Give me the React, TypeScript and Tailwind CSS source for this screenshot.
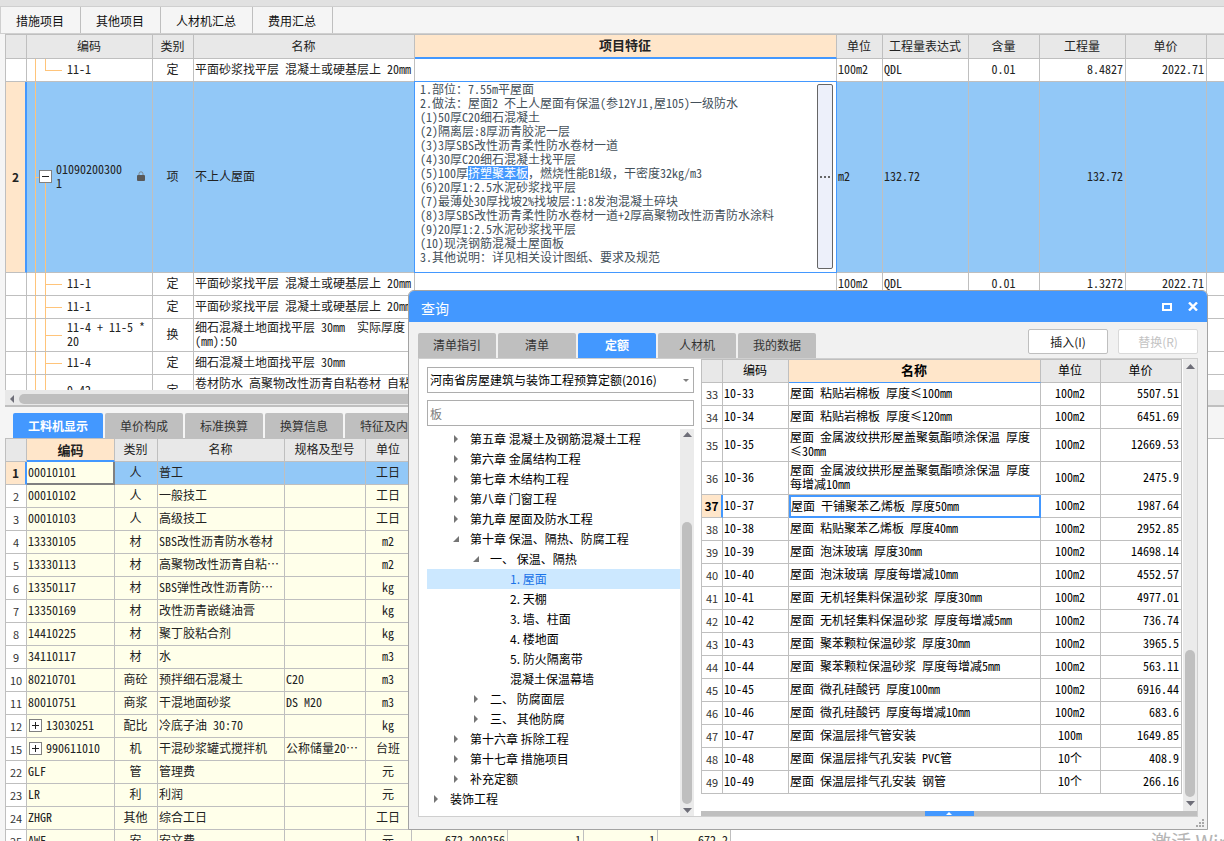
import { useState } from "react";
import clsx from "clsx";

const ui = "font-['Noto_Sans_CJK_SC',sans-serif]";
// Grid text uses the half-width latin forms, so two digits take one han cell
const grid = "font-['Noto_Sans_CJK_SC',sans-serif] [font-feature-settings:'hwid'] text-xs leading-[14px]";

const cellBase = "border-r border-b border-[#bfbfbf] pt-0 pb-0.5 pr-0.5 font-normal overflow-hidden";
const cell = clsx(cellBase, "pl-px");
const rowNo = "border-r border-b border-[#bfbfbf] bg-white p-0 text-center text-[11px] text-[#333] [font-feature-settings:normal]";
const rowNoCurrent = "border-r-2 border-b border-r-[#4398ff] border-b-[#bfbfbf] bg-[#ffe6ca] p-0 text-center font-bold [font-feature-settings:normal]";

const topTabs = ["措施项目", "其他项目", "人材机汇总", "费用汇总"];

interface ItemRow {
    code: string;
    type: string;
    name: string;
    tall?: boolean;
    last?: boolean;
    unit?: string;
    expr?: string;
    content?: string;
    qty?: string;
    price?: string;
}

const firstItem: ItemRow = { code: "11-1", type: "定", name: "平面砂浆找平层 混凝土或硬基层上 20mm", unit: "100m2", expr: "QDL", content: "0.01", qty: "8.4827", price: "2022.71", last: true };

const childItems: ItemRow[] = [
    { code: "11-1", type: "定", name: "平面砂浆找平层 混凝土或硬基层上 20mm", unit: "100m2", expr: "QDL", content: "0.01", qty: "1.3272", price: "2022.71" },
    { code: "11-1", type: "定", name: "平面砂浆找平层 混凝土或硬基层上 20mm" },
    { code: "11-4 + 11-5 *\n20", type: "换", name: "细石混凝土地面找平层 30mm  实际厚度\n(mm):50", tall: true },
    { code: "11-4", type: "定", name: "细石混凝土地面找平层 30mm" },
    { code: "9-42", type: "定", name: "卷材防水 高聚物改性沥青自粘卷材 自粘\n法一层 平面", tall: true },
];

const bottomTabs = ["工料机显示", "单价构成", "标准换算", "换算信息", "特征及内容"];

interface Resource {
    no: number;
    code: string;
    type: string;
    name: string;
    spec?: string;
    unit: string;
    expandable?: boolean;
    values?: string[];
}

const resources: Resource[] = [
    { no: 1, code: "00010101", type: "人", name: "普工", unit: "工日" },
    { no: 2, code: "00010102", type: "人", name: "一般技工", unit: "工日" },
    { no: 3, code: "00010103", type: "人", name: "高级技工", unit: "工日" },
    { no: 4, code: "13330105", type: "材", name: "SBS改性沥青防水卷材", unit: "m2" },
    { no: 5, code: "13330113", type: "材", name: "高聚物改性沥青自粘⋯", unit: "m2" },
    { no: 6, code: "13350117", type: "材", name: "SBS弹性改性沥青防⋯", unit: "kg" },
    { no: 7, code: "13350169", type: "材", name: "改性沥青嵌缝油膏", unit: "kg" },
    { no: 8, code: "14410225", type: "材", name: "聚丁胶粘合剂", unit: "kg" },
    { no: 9, code: "34110117", type: "材", name: "水", unit: "m3" },
    { no: 10, code: "80210701", type: "商砼", name: "预拌细石混凝土", spec: "C20", unit: "m3" },
    { no: 11, code: "80010751", type: "商浆", name: "干混地面砂浆", spec: "DS M20", unit: "m3" },
    { no: 12, code: "13030251", type: "配比", name: "冷底子油 30:70", unit: "kg", expandable: true },
    { no: 15, code: "990611010", type: "机", name: "干混砂浆罐式搅拌机", spec: "公称储量20⋯", unit: "台班", expandable: true },
    { no: 22, code: "GLF", type: "管", name: "管理费", unit: "元" },
    { no: 23, code: "LR", type: "利", name: "利润", unit: "元" },
    { no: 24, code: "ZHGR", type: "其他", name: "综合工日", unit: "工日" },
    { no: 25, code: "AWF", type: "安", name: "安文费", unit: "元", values: ["672.200256", "1", "1", "672.2"] },
];

const dialogTabs = ["清单指引", "清单", "定额", "人材机", "我的数据"];

interface TreeNode {
    label: string;
    level: number;
    state?: "open" | "closed";
}

const tree: TreeNode[] = [
    { label: "第五章 混凝土及钢筋混凝土工程", level: 1, state: "closed" },
    { label: "第六章 金属结构工程", level: 1, state: "closed" },
    { label: "第七章 木结构工程", level: 1, state: "closed" },
    { label: "第八章 门窗工程", level: 1, state: "closed" },
    { label: "第九章 屋面及防水工程", level: 1, state: "closed" },
    { label: "第十章 保温、隔热、防腐工程", level: 1, state: "open" },
    { label: "一、 保温、隔热", level: 2, state: "open" },
    { label: "1. 屋面", level: 3 },
    { label: "2. 天棚", level: 3 },
    { label: "3. 墙、柱面", level: 3 },
    { label: "4. 楼地面", level: 3 },
    { label: "5. 防火隔离带", level: 3 },
    { label: "混凝土保温幕墙", level: 3 },
    { label: "二、 防腐面层", level: 2, state: "closed" },
    { label: "三、 其他防腐", level: 2, state: "closed" },
    { label: "第十六章 拆除工程", level: 1, state: "closed" },
    { label: "第十七章 措施项目", level: 1, state: "closed" },
    { label: "补充定额", level: 1, state: "closed" },
    { label: "装饰工程", level: 0, state: "closed" },
];

const indent = ["pl-1", "pl-6", "pl-11", "pl-16"];

const quotas = [
    { no: 33, name: "屋面 粘贴岩棉板 厚度≤100mm", unit: "100m2", price: "5507.51" },
    { no: 34, name: "屋面 粘贴岩棉板 厚度≤120mm", unit: "100m2", price: "6451.69" },
    { no: 35, name: "屋面 金属波纹拱形屋盖聚氨酯喷涂保温 厚度\n≤30mm", unit: "100m2", price: "12669.53" },
    { no: 36, name: "屋面 金属波纹拱形屋盖聚氨酯喷涂保温 厚度\n每增减10mm", unit: "100m2", price: "2475.9" },
    { no: 37, name: "屋面 干铺聚苯乙烯板 厚度50mm", unit: "100m2", price: "1987.64" },
    { no: 38, name: "屋面 粘贴聚苯乙烯板 厚度40mm", unit: "100m2", price: "2952.85" },
    { no: 39, name: "屋面 泡沫玻璃 厚度30mm", unit: "100m2", price: "14698.14" },
    { no: 40, name: "屋面 泡沫玻璃 厚度每增减10mm", unit: "100m2", price: "4552.57" },
    { no: 41, name: "屋面 无机轻集料保温砂浆 厚度30mm", unit: "100m2", price: "4977.01" },
    { no: 42, name: "屋面 无机轻集料保温砂浆 厚度每增减5mm", unit: "100m2", price: "736.74" },
    { no: 43, name: "屋面 聚苯颗粒保温砂浆 厚度30mm", unit: "100m2", price: "3965.5" },
    { no: 44, name: "屋面 聚苯颗粒保温砂浆 厚度每增减5mm", unit: "100m2", price: "563.11" },
    { no: 45, name: "屋面 微孔硅酸钙 厚度100mm", unit: "100m2", price: "6916.44" },
    { no: 46, name: "屋面 微孔硅酸钙 厚度每增减10mm", unit: "100m2", price: "683.6" },
    { no: 47, name: "屋面 保温层排气管安装", unit: "100m", price: "1649.85" },
    { no: 48, name: "屋面 保温层排气孔安装 PVC管", unit: "10个", price: "408.9" },
    { no: 49, name: "屋面 保温层排气孔安装 钢管", unit: "10个", price: "266.16" },
];

function Triangle({ dir, className }: { dir: "up" | "down" | "left" | "right" | "open"; className?: string }) {
    const shapes = {
        up: "M0 6 L4.5 1 L9 6 Z",
        down: "M0 2 L9 2 L4.5 7 Z",
        left: "M5 0 L5 8 L1 4 Z",
        right: "M3 0 L7 4 L3 8 Z",
        open: "M8 1 L8 7 L2 7 Z",
    };
    return (
        <svg viewBox="0 0 9 8" className={clsx("h-2 w-[9px] shrink-0 fill-current", className)} aria-hidden="true">
            <path d={shapes[dir]} />
        </svg>
    );
}

function ToggleBox({ open, label }: { open?: boolean; label: string }) {
    return (
        <button aria-label={label} className="flex size-[13px] shrink-0 items-center justify-center border border-[#808080] bg-white">
            <svg viewBox="0 0 9 9" className="size-[9px]" aria-hidden="true">
                <path d={open ? "M1 4.5H8" : "M1 4.5H8M4.5 1V8"} stroke="#222" strokeWidth="1" />
            </svg>
        </button>
    );
}

function LockIcon() {
    return (
        <svg viewBox="0 0 8 10" className="h-2.5 w-2 shrink-0" aria-hidden="true">
            <path d="M2 4.5V2.8a2 2 0 0 1 4 0V4.5" fill="none" stroke="#7a8790" />
            <rect y="4" width="8" height="6" rx="1" fill="#595959" />
        </svg>
    );
}

function ItemLine({ item }: { item: ItemRow }) {
    return (
        <tr className={clsx("bg-white", item.tall ? "h-[33px]" : "h-[23px]")}>
            <td className={cell} />
            <td className={clsx(cellBase, "relative pl-10 whitespace-pre")}>
                <span className="absolute inset-y-0 left-2 w-px bg-[#ffc47a]" />
                <span className={clsx("absolute top-0 left-[18px] w-px bg-[#ffc47a]", item.last ? "h-1/2" : "h-full")} />
                <span className="absolute top-1/2 left-[18px] h-px w-[17px] bg-[#ffc47a]" />
                {item.code}
            </td>
            <td className={clsx(cell, "text-center")}>{item.type}</td>
            <td className={clsx(cell, "whitespace-pre")}>{item.name}</td>
            <td className={cell} />
            <td className={cell}>{item.unit}</td>
            <td className={cell}>{item.expr}</td>
            <td className={clsx(cell, "text-center")}>{item.content}</td>
            <td className={clsx(cell, "text-right")}>{item.qty}</td>
            <td className={clsx(cell, "text-right")}>{item.price}</td>
            <td className={clsx(cell, "border-r-0")} />
        </tr>
    );
}

function FeatureEditor() {
    // Overlaps the grid lines above and to the left, so the frame replaces them
    return (
        <div className="relative -mt-px -ml-px flex h-48 border border-[#4398ff] bg-white text-[#44505a]">
            <div
                role="textbox"
                aria-multiline="true"
                aria-label="项目特征"
                contentEditable
                suppressContentEditableWarning
                className="grow whitespace-pre pl-[5px] outline-none"
            >
                {"1.部位：7.55m平屋面\n2.做法：屋面2 不上人屋面有保温(参12YJ1,屋105)一级防水\n(1)50厚C20细石混凝土\n(2)隔离层:8厚沥青胶泥一层\n(3)3厚SBS改性沥青柔性防水卷材一道\n(4)30厚C20细石混凝土找平层\n(5)100厚"}
                <mark className="inline-block h-3.5 bg-[#4398ff] align-top leading-[14px] text-white">挤塑聚苯板</mark>
                <span className="[font-feature-settings:normal]">，</span>
                {"燃烧性能B1级"}
                <span className="[font-feature-settings:normal]">，</span>
                {"干密度32kg/m3\n(6)20厚1:2.5水泥砂浆找平层\n(7)最薄处30厚找坡2%找坡层:1:8发泡混凝土碎块\n(8)3厚SBS改性沥青柔性防水卷材一道+2厚高聚物改性沥青防水涂料\n(9)20厚1:2.5水泥砂浆找平层\n(10)现浇钢筋混凝土屋面板\n3.其他说明：详见相关设计图纸、要求及规范"}
            </div>
            <button aria-label="编辑项目特征" className="mt-0.5 mr-[3px] mb-[3px] flex w-4 shrink-0 items-center justify-center gap-0.5 rounded-xs border border-[#666] bg-[#edf0fa]">
                <span className="size-0.5 bg-[#666]" />
                <span className="size-0.5 bg-[#666]" />
                <span className="size-0.5 bg-[#666]" />
            </button>
        </div>
    );
}

function ItemTable() {
    const head = clsx(cell, "border-t bg-[#e8e8e8]");
    return (
        <table className={clsx(grid, "w-full table-fixed border-separate border-spacing-0 border-l border-[#bfbfbf] text-[#222]")}>
            <colgroup>
                <col className="w-[21px]" />
                <col className="w-[126px]" />
                <col className="w-[41px]" />
                <col className="w-[221px]" />
                <col />
                <col className="w-[46px]" />
                <col className="w-[86px]" />
                <col className="w-[71px]" />
                <col className="w-[86px]" />
                <col className="w-[81px]" />
                <col className="w-[17px]" />
            </colgroup>
            <thead>
                <tr className="h-[25px]">
                    <th className={head} />
                    <th className={head}>编码</th>
                    <th className={head}>类别</th>
                    <th className={head}>名称</th>
                    <th className="border-t border-r border-b-2 border-t-[#bfbfbf] border-r-[#bfbfbf] border-b-[#4398ff] bg-[#ffe6ca] pt-0 pr-0.5 pb-0.5 pl-px text-[13px] font-bold">项目特征</th>
                    <th className={head}>单位</th>
                    <th className={head}>工程量表达式</th>
                    <th className={head}>含量</th>
                    <th className={head}>工程量</th>
                    <th className={head}>单价</th>
                    <th className={clsx(head, "border-r-0")} />
                </tr>
            </thead>
            <tbody>
                <ItemLine item={firstItem} />
                <tr className="h-[191px] bg-[#92c8f7]">
                    <td className={rowNoCurrent}>2</td>
                    <td className={clsx(cell, "relative")}>
                        <span className="absolute inset-y-0 left-2 w-px bg-[#ffc47a]" />
                        <span className="absolute top-1/2 left-2 h-px w-1 bg-[#ffc47a]" />
                        <span className="absolute top-1/2 bottom-0 left-[18px] w-px bg-[#ffc47a]" />
                        <div className="relative flex items-center gap-1 pr-[5px] pl-[11px]">
                            <ToggleBox open label="收起" />
                            <span className="w-[70px] break-all">010902003001</span>
                            <span className="ml-auto">
                                <LockIcon />
                            </span>
                        </div>
                    </td>
                    <td className={clsx(cell, "text-center")}>项</td>
                    <td className={cell}>不上人屋面</td>
                    <td className="p-0">
                        <FeatureEditor />
                    </td>
                    <td className={cell}>m2</td>
                    <td className={cell}>132.72</td>
                    <td className={cell} />
                    <td className={clsx(cell, "text-right")}>132.72</td>
                    <td className={cell} />
                    <td className={clsx(cell, "border-r-0")} />
                </tr>
                {childItems.map((item, i) => (
                    <ItemLine key={i} item={item} />
                ))}
            </tbody>
        </table>
    );
}

function ResourceTable() {
    const head = clsx(cell, "bg-[#e8e8e8]");
    return (
        <table className={clsx(grid, "w-[726px] table-fixed border-separate border-spacing-0 border-l border-[#bfbfbf] text-[#222]")}>
            <colgroup>
                <col className="w-[21px]" />
                <col className="w-[88px]" />
                <col className="w-[43px]" />
                <col className="w-[127px]" />
                <col className="w-[81px]" />
                <col className="w-[46px]" />
                <col className="w-[96px]" />
                <col className="w-[76px]" />
                <col className="w-[74px]" />
                <col />
            </colgroup>
            <thead>
                <tr className="h-[23px]">
                    <th className={head} />
                    <th className="border-r border-b-2 border-r-[#bfbfbf] border-b-[#4398ff] bg-[#ffe6ca] p-0 text-[13px] font-bold">编码</th>
                    <th className={head}>类别</th>
                    <th className={head}>名称</th>
                    <th className={head}>规格及型号</th>
                    <th className={head}>单位</th>
                    <th className={head} />
                    <th className={head} />
                    <th className={head} />
                    <th className={head} />
                </tr>
            </thead>
            <tbody>
                {resources.map((r, i) => (
                    <tr key={r.no} className={clsx("h-[23px]", i === 0 ? "bg-[#92c8f7]" : "bg-[#ffffea]")}>
                        <td className={i === 0 ? rowNoCurrent : rowNo}>{r.no}</td>
                        <td className={i === 0 ? "border-r-2 border-b-2 border-[#808080] bg-[#ffffea] pt-0 pr-0.5 pb-0.5 pl-px" : cell}>
                            {r.expandable ? (
                                <div className="flex items-center gap-1 pl-px">
                                    <ToggleBox label="展开" />
                                    <span>{r.code}</span>
                                </div>
                            ) : (
                                r.code
                            )}
                        </td>
                        <td className={clsx(cell, "text-center")}>{r.type}</td>
                        <td className={clsx(cell, "whitespace-nowrap")}>{r.name}</td>
                        <td className={clsx(cell, "whitespace-nowrap")}>{r.spec}</td>
                        <td className={clsx(cell, "text-center")}>{r.unit}</td>
                        {[0, 1, 2, 3].map((n) => (
                            <td key={n} className={clsx(cell, "text-right")}>{r.values?.[n]}</td>
                        ))}
                    </tr>
                ))}
            </tbody>
        </table>
    );
}

function QuotaTable() {
    const head = clsx(cell, "border-t bg-[#e8e8e8]");
    return (
        <table className={clsx(grid, "w-full table-fixed border-separate border-spacing-0 border-l border-[#bfbfbf] text-black")}>
            <colgroup>
                <col className="w-[21px]" />
                <col className="w-[66px]" />
                <col />
                <col className="w-[60px]" />
                <col className="w-[81px]" />
            </colgroup>
            <thead>
                <tr className="h-6">
                    <th className={head} />
                    <th className={head}>编码</th>
                    <th className="border-t border-r border-b border-t-[#bfbfbf] border-r-[#bfbfbf] border-b-[#4398ff] bg-[#ffe6ca] pt-0 pr-0.5 pb-0.5 pl-px text-[13px] font-bold">名称</th>
                    <th className={head}>单位</th>
                    <th className={head}>单价</th>
                </tr>
            </thead>
            <tbody>
                {quotas.map((q) => {
                    const current = q.no === 37;
                    return (
                        <tr key={q.no} className={q.name.includes("\n") ? "h-[33px]" : "h-[23px]"}>
                            <td className={current ? rowNoCurrent : rowNo}>{q.no}</td>
                            <td className={cell}>{`10-${q.no}`}</td>
                            <td className={clsx("whitespace-pre", current ? "border-2 border-[#4398ff] pt-0 pr-0 pb-0.5 pl-0" : cell)}>{q.name}</td>
                            <td className={clsx(cell, "text-center")}>{q.unit}</td>
                            <td className={clsx(cell, "text-right")}>{q.price}</td>
                        </tr>
                    );
                })}
            </tbody>
        </table>
    );
}

function QueryDialog() {
    const [tab, setTab] = useState("定额");
    const [node, setNode] = useState("1. 屋面");

    return (
        <section
            role="dialog"
            aria-label="查询"
            className={clsx(ui, "absolute top-[290px] left-[408px] flex h-[540px] w-[800px] flex-col rounded-t-md border border-[#a3a3a3] bg-[#f1f1f1] text-xs")}
        >
            {/* Title bar */}
            <header className="flex h-[31px] shrink-0 items-center rounded-t-[5px] bg-[#4398ff] px-3 text-white">
                <h2 className="grow pt-0.5 text-sm">查询</h2>
                <button aria-label="最大化" className="mr-4">
                    <svg viewBox="0 0 10 8" className="h-2 w-2.5" aria-hidden="true">
                        <path d="M0 0H10V8H0ZM2 2V6H8V2Z" fill="white" fillRule="evenodd" />
                    </svg>
                </button>
                <button aria-label="关闭" className="mr-[-3px]">
                    <svg viewBox="0 0 10 9" className="h-[9px] w-2.5" aria-hidden="true">
                        <path d="M1 0.5L9 8.5M9 0.5L1 8.5" stroke="white" strokeWidth="2.4" />
                    </svg>
                </button>
            </header>

            {/* Tabs and actions */}
            <div className="flex h-9 shrink-0 items-end px-[9px]">
                <div role="tablist" className="flex grow gap-0.5">
                    {dialogTabs.map((t) => (
                        <button
                            key={t}
                            role="tab"
                            aria-selected={t === tab}
                            onClick={() => setTab(t)}
                            className={clsx("h-[25px] w-[78px] rounded-t-xs pb-0.5", t === tab ? "bg-[#4398ff] font-bold text-white" : "bg-[#bfbfbf] text-[#333]")}
                        >
                            {t}
                        </button>
                    ))}
                </div>
                <div className="mb-1 flex gap-2.5">
                    <button className="h-[25px] w-20 rounded-xs border border-[#bfbfbf] bg-white text-[#222]">插入(I)</button>
                    <button disabled className="h-[25px] w-20 rounded-xs border border-[#d9d9d9] bg-white text-[#c3c3c3]">替换(R)</button>
                </div>
            </div>

            <div className="mx-[9px] flex min-h-0 grow border border-[#cfcfcf] bg-white">
                {/* Quota library */}
                <div className="flex w-[275px] shrink-0 flex-col pt-2 pl-2">
                    <div className="relative">
                        <select aria-label="定额库" className="h-[26px] w-full appearance-none border border-[#adadad] bg-white pl-0.5 text-black">
                            <option>河南省房屋建筑与装饰工程预算定额(2016)</option>
                        </select>
                        <svg viewBox="0 0 6 3" className="pointer-events-none absolute top-3 right-[5px] h-[3px] w-1.5 fill-[#808080]" aria-hidden="true">
                            <path d="M0 0H6L3 3Z" />
                        </svg>
                    </div>
                    <input aria-label="搜索" defaultValue="板" className="mt-[7px] h-[26px] w-full shrink-0 border border-[#adadad] pl-0.5 text-[#808080]" />
                    <div className="mt-[3px] flex min-h-0 grow">
                        <ul role="tree" className="grow">
                            {tree.map((n) => (
                                <li key={n.label} role="treeitem" aria-selected={n.label === node}>
                                    <button
                                        onClick={() => setNode(n.label)}
                                        className={clsx(
                                            "flex h-5 w-full items-center text-left whitespace-pre",
                                            indent[n.level],
                                            n.label === node ? "bg-[#cce8ff] text-[#1a73e8]" : "text-black"
                                        )}
                                    >
                                        <span className="flex w-[19px] shrink-0 text-[#757575]">
                                            {n.state && <Triangle dir={n.state === "open" ? "open" : "right"} />}
                                        </span>
                                        {n.label}
                                    </button>
                                </li>
                            ))}
                        </ul>
                        <div className="flex w-3.5 shrink-0 flex-col items-center bg-[#ebebeb] text-[#6e6e78]">
                            <Triangle dir="up" className="mt-0.5" />
                            <div className="mt-[83px] w-2.5 grow rounded-full bg-[#bfbfbf]" />
                            <Triangle dir="down" className="my-0.5" />
                        </div>
                    </div>
                </div>

                {/* Quota rows */}
                <div className="ml-[7px] flex min-w-0 grow flex-col">
                    <div className="flex min-h-0 grow">
                        <div className="min-w-0 grow">
                            <QuotaTable />
                        </div>
                        <div className="ml-px flex w-3.5 shrink-0 flex-col items-center bg-[#ebebeb] text-[#6e6e78]">
                            <Triangle dir="up" className="mt-1" />
                            <div className="mt-[279px] w-2.5 grow rounded-full bg-[#bfbfbf]" />
                            <Triangle dir="down" className="mt-0.5 mb-1" />
                        </div>
                    </div>
                    <div className="flex h-[5px] shrink-0 justify-center bg-[#bfbfbf]">
                        <button aria-label="展开详情" className="flex w-[49px] items-center justify-center bg-[#4398ff] text-white">
                            <svg viewBox="0 0 6 3" className="h-[3px] w-1.5 fill-white" aria-hidden="true">
                                <path d="M3 0L6 3H0Z" />
                            </svg>
                        </button>
                    </div>
                </div>
            </div>

            <footer className="flex h-3 shrink-0 items-center justify-end pr-[3px]">
                <svg viewBox="0 0 8 8" className="size-2 fill-[#a8a8a8]" aria-hidden="true">
                    <path d="M6 0h2v2H6zM3 3h2v2H3zM6 3h2v2H6zM0 6h2v2H0zM3 6h2v2H3zM6 6h2v2H6z" />
                </svg>
            </footer>
        </section>
    );
}

export default function App() {
    const [bottomTab, setBottomTab] = useState("工料机显示");

    return (
        <main lang="zh-CN" className={clsx(ui, "relative flex h-screen flex-col overflow-hidden bg-[#f5f5f5] text-xs text-[#222]")}>
            <div className="h-[7px] shrink-0 border-b border-[#cfcfcf] bg-[#e1e1e1]" />
            <nav className="flex h-[27px] shrink-0 border-b border-l border-[#cfcfcf]">
                {topTabs.map((t) => (
                    <button key={t} className="border-r border-[#bfbfbf] pt-0.5 pr-4 pl-[15px] text-[#111]">
                        {t}
                    </button>
                ))}
            </nav>

            {/* Upper split pane */}
            <div className="h-[356px] shrink-0 overflow-hidden pl-[5px]">
                <ItemTable />
            </div>
            <div className="ml-[5px] flex h-[17px] shrink-0 items-center border-b-2 border-[#bfbfbf] bg-[#e8e8e8] pt-0.5 pl-1 text-[#6e6e78]">
                <Triangle dir="left" />
                <div className="ml-px h-2.5 w-[1100px] rounded-full bg-[#bfbfbf]" />
            </div>

            {/* Lower split pane */}
            <div role="tablist" className="flex h-[31px] shrink-0 items-end gap-0.5 pl-[13px]">
                {bottomTabs.map((t) => (
                    <button
                        key={t}
                        role="tab"
                        aria-selected={t === bottomTab}
                        onClick={() => setBottomTab(t)}
                        className={clsx("h-[25px] rounded-t-xs px-[15px]", t === bottomTab ? "bg-[#4398ff] font-bold text-white" : "bg-[#bfbfbf] text-[#333]")}
                    >
                        {t}
                    </button>
                ))}
            </div>
            <div className="min-h-0 grow overflow-hidden pl-[5px]">
                <div className="h-full border-t border-[#bfbfbf] bg-white">
                    <ResourceTable />
                </div>
            </div>

            <p className="absolute top-[828px] left-[1151px] text-xl leading-7 whitespace-nowrap text-[#b5b5b5]">激活 Windows</p>
            <QueryDialog />
        </main>
    );
}
